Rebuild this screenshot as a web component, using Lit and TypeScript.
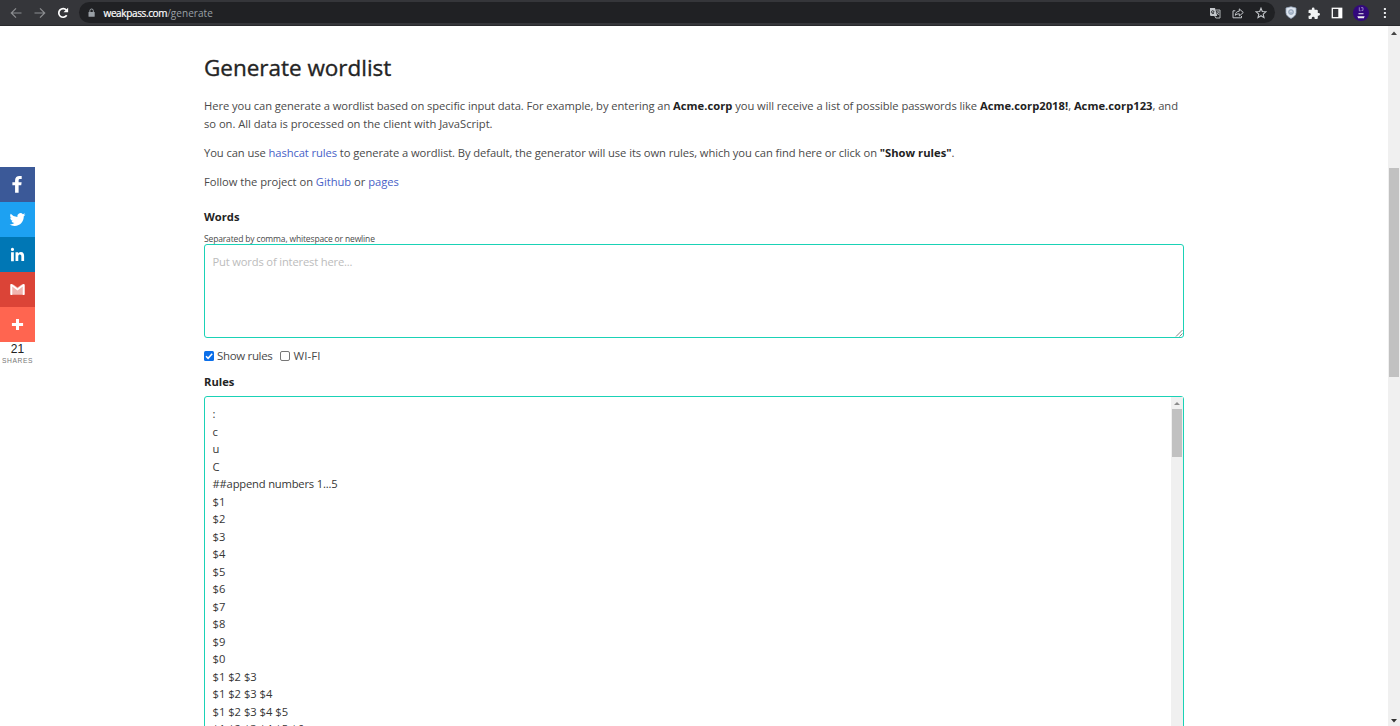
import { LitElement, html, css, svg } from "lit";
import { customElement } from "lit/decorators.js";
import { classMap } from "lit/directives/class-map.js";

const RULES = [
  ":", "c", "u", "C", "##append numbers 1...5",
  "$1", "$2", "$3", "$4", "$5", "$6", "$7", "$8", "$9", "$0",
  "$1 $2 $3", "$1 $2 $3 $4", "$1 $2 $3 $4 $5", "$1 $2 $3 $4 $5 $6",
];

const SHARES = [
  { name: "facebook", art: svg`<path d="M12.300 28.500h5.400V17.300h4l.6-4.800h-4.600V10c0-1.500.5-2.300 2.300-2.300h2.400V3.200c-.6-.1-2-.2-3.500-.2-3.900 0-6.600 2.200-6.600 6.500v3H8.200v4.800h4.100z"/>` },
  { name: "twitter", art: svg`<path d="M28 8.560a9.900 9.900 0 0 1-2.830.780 4.900 4.900 0 0 0 2.170-2.730 9.900 9.900 0 0 1-3.130 1.200 4.920 4.920 0 0 0-8.390 4.490A14 14 0 0 1 5.670 7.150a4.920 4.920 0 0 0 1.520 6.570 4.900 4.900 0 0 1-2.230-.610v.060c0 2.380 1.700 4.370 3.950 4.820a4.900 4.900 0 0 1-2.220.090 4.930 4.930 0 0 0 4.600 3.420A9.900 9.900 0 0 1 4 23.540a13.940 13.940 0 0 0 7.550 2.210c9.060 0 14-7.500 14-14v-.640A10 10 0 0 0 28 8.560z"/>` },
  { name: "linkedin", art: svg`<path d="M6.200 12.600h4.200v13.500H6.200zM8.300 5.900a2.430 2.430 0 1 1 0 4.860 2.430 2.430 0 0 1 0-4.860M13 12.600h4v1.840h.06c.56-1.060 1.930-2.180 3.970-2.180 4.240 0 5.030 2.800 5.030 6.420v7.400h-4.190v-6.560c0-1.560-.03-3.580-2.180-3.580-2.180 0-2.510 1.700-2.510 3.460v6.680H13z"/>` },
  { name: "gmail", art: svg`<path opacity=".6" d="M7 8h18v16H7z"/><path class="cut" d="M8.500 7.500h15L16 13z"/><path d="M27 9.300v13.400c0 .8-.6 1.500-1.500 1.500H24V11.500l-8 6-8-6v12.700H6.500c-.9 0-1.500-.7-1.500-1.500V9.300C5 8.400 5.700 7.800 6.500 7.800H7l9 6.600 9-6.600h.5c.9 0 1.500.6 1.500 1.500z"/>` },
  { name: "more", art: svg`<path d="M13.700 7.500h4.600v17h-4.600zM7.500 13.700h17v4.600h-17z"/>` },
];

@customElement("browser-bar")
export class BrowserBar extends LitElement {
  static styles = css`
    :host { display: flex; align-items: center; height: 26px; box-sizing: border-box; background: #35363a; border-bottom: 1px solid #292a2d; color: #e8eaed; font-family: "Open Sans", "Noto Sans", sans-serif; }
    svg { display: block; flex: none; fill: none; stroke: currentColor; }
    .nav { display: flex; align-items: center; gap: 11.500px; width: 79px; box-sizing: border-box; padding-left: 10px; flex: none; }
    .dim { color: #8c8e91; }
    .reload { color: #fff; }
    .omnibox { display: flex; align-items: center; flex: none; width: 1196px; height: 21px; box-sizing: border-box; padding: 0 8px 0 8px; border-radius: 11px; background: #202124; }
    .lock { color: #9aa0a6; }
    .url { flex: 1; padding-left: 7.500px; font-size: 10px; line-height: 20px; color: #9aa0a6; letter-spacing: .05px; }
    .host { color: #fff; letter-spacing: -.37px; -webkit-text-stroke: .2px #fff; }
    .inner { display: flex; gap: 11px; color: #c4c7cb; }
    .outer { display: flex; align-items: center; padding-left: 9.500px; gap: 11.300px; }
    .avatar { margin-left: -1px; }
    .menu { margin-left: -1px; }
  `;
  render() {
    return html`
      <div class="nav">
        <svg class="dim" width="12" height="12" viewBox="0 0 12 12" stroke-width="1.200"><path d="M11.500 6H1.500M6 1.300 1.300 6 6 10.700"/></svg>
        <svg class="dim" width="12" height="12" viewBox="0 0 12 12" stroke-width="1.200"><path d="M.5 6h10M6 1.300 10.700 6 6 10.700"/></svg>
        <svg class="reload" width="12" height="12" viewBox="0 0 12 12" stroke-width="1.700"><path d="M9.700 8.300A4.300 4.300 0 1 1 9.400 3.200"/><path d="M11.100.7v4.600H6.500z" fill="currentColor" stroke="none"/></svg>
      </div>
      <div class="omnibox">
        <svg class="lock" width="9" height="10" viewBox="0 0 9 10"><rect x="1.500" y="4" width="6.200" height="4.800" rx=".6" fill="currentColor" stroke="none"/><path d="M2.900 4.300V2.700a1.700 1.700 0 0 1 3.400 0v1.600" stroke-width="1"/></svg>
        <div class="url"><span class="host">weakpass.com</span>/generate</div>
        <div class="inner">
          <svg width="12" height="12" viewBox="0 0 12 12"><path d="M1 1h5l2.200 8H1.800L1 8.200z" fill="currentColor" stroke="none"/><path d="M6.500 3H11v8H6.800L5.800 9" stroke-width=".9"/><path d="M5.500 4.700H3.900v1.500h.9A1.500 1.500 0 1 1 4.500 3.700" stroke="#202124" stroke-width=".8"/><path d="M7.600 5h2.700M9 4.200V5M9.800 5.200 7.900 7.600M8.200 6l1.700 2" stroke-width=".7"/></svg>
          <svg width="12" height="12" viewBox="0 0 12 12" stroke-width="1"><path d="M3.300 3.800H1v7h8.500V9"/><path d="M3.300 8.300c.3-2.800 1.800-4 4-4.100V1.900l4 3.600-4 3.500V6.800c-1.700 0-3 .5-4 1.500z" stroke-linejoin="round"/></svg>
          <svg width="12" height="12" viewBox="0 0 12 12" stroke-width="1.100"><path d="m6 1.200 1.300 3.300 3.600.3-2.700 2.300.8 3.500L6 8.700l-3 1.900.8-3.500L1.100 4.800l3.600-.3z"/></svg>
        </div>
      </div>
      <div class="outer">
        <svg width="12" height="13" viewBox="0 0 12 13"><path d="M6 .8 11 2v4.500c0 2.700-2.300 4.700-5 5.900-2.700-1.200-5-3.200-5-5.900V2z" fill="#dfe6ef" stroke="#9babc0" stroke-width=".8"/><circle cx="6" cy="6" r="2.500" fill="#a8b7ca" stroke="#8798ae" stroke-width=".6"/><path d="M5 6.300c0-1.800 2-1.800 2 0" stroke="#eef" stroke-width=".6"/></svg>
        <svg width="12" height="12" viewBox="1 0 22 22"><path fill="#f1f3f4" stroke="none" d="M20.500 11H19V7a2 2 0 0 0-2-2h-4V3.500a2.500 2.500 0 0 0-5 0V5H4a2 2 0 0 0-2 2v3.800h1.500a2.700 2.700 0 0 1 0 5.400H2V20c0 1.100.9 2 2 2h3.800v-1.500a2.700 2.700 0 0 1 5.400 0V22H17a2 2 0 0 0 2-2v-4h1.500a2.500 2.500 0 0 0 0-5z"/></svg>
        <svg width="12" height="12" viewBox="0 0 12 12"><rect x="1.300" y="1.300" width="9.400" height="9.400" stroke="#fff" stroke-width="1.300"/><path d="M7.300 1H11v10H7.300z" fill="#fff" stroke="none"/></svg>
        <svg class="avatar" width="16" height="16" viewBox="0 0 16 16"><circle cx="8" cy="8" r="8" fill="#32087c" stroke="none"/><path d="M6.300 2.300v3.500h1.300M8 2.700h2v2.700H8.500" stroke="#a999d0" stroke-width=".8"/><path d="M5.500 8.800h5M4.500 11.700h7M5 12.800h6" stroke="#eee" stroke-width="1.100"/></svg>
        <svg class="menu" width="10" height="12" viewBox="0 0 10 12"><path fill="#e8eaed" stroke="none" d="M3.900 1h2v2h-2zM3.900 5h2v2h-2zM3.900 9h2v2h-2z"/></svg>
      </div>`;
  }
}

@customElement("share-rail")
export class ShareRail extends LitElement {
  static styles = css`
    :host { display: block; width: 35px; font-family: "Liberation Sans", Arial, sans-serif; text-align: center; }
    .tile { display: flex; align-items: center; justify-content: center; height: 35px; }
    .tile svg { width: 21px; height: 21px; fill: #fff; display: block; }
    .facebook { background: #3b5998; }
    .twitter { background: #1da1f2; }
    .linkedin { background: #0077b5; }
    .gmail { background: #db4437; }
    .gmail .cut { fill: #db4437; }
    .more { background: #ff6550; }
    .count { font-size: 12px; line-height: 14px; color: #222; }
    .label { font-size: 6.700px; line-height: 8px; padding-top: 1px; letter-spacing: .6px; color: #777; white-space: nowrap; }
  `;
  render() {
    return html`
      ${SHARES.map((s) => html`<div class="tile ${s.name}"><svg viewBox="0 0 32 32">${s.art}</svg></div>`)}
      <div class="count">21</div>
      <div class="label">SHARES</div>`;
  }
}

@customElement("app-root")
export class AppRoot extends LitElement {
  static styles = css`
    :host { display: flex; flex-direction: column; position: relative; height: 726px; overflow: hidden; background: #fff; color: #4a4a4a; font: 11.200px/17.500px "Open Sans", "Noto Sans", sans-serif; }
    browser-bar { flex: none; }
    .page { display: flex; flex: 1; min-height: 0; }
    .content { flex: 1; min-width: 0; padding: 27px 204px 0 204px; overflow: hidden; }
    .form { width: 980px; }
    h1 { margin: 0; font-size: 22.500px; line-height: 30px; font-weight: 500; color: #242424; -webkit-text-stroke: .35px #242424; letter-spacing: -.02px; }
    p { margin: 0; white-space: nowrap; letter-spacing: -.068px; }
    .intro { margin-top: 14px; }
    .second-line { letter-spacing: -.03px; }
    .gap { margin-top: 11.700px; }
    .usage { letter-spacing: -.082px; }
    .follow { letter-spacing: -.03px; }
    a { color: #485fc7; }
    b { color: #222; font-weight: 700; letter-spacing: .03px; }
    .label { font-weight: 700; color: #242424; }
    .words { margin-top: 18px; }
    .hint { margin-top: 7px; font-size: 8.500px; line-height: 12px; letter-spacing: -.15px; }
    .box { display: flex; box-sizing: border-box; border: 1px solid #1ad2b6; border-radius: 3px; background: #fff; }
    .input { height: 94px; margin-top: -1px; padding: 8px 7px 8px 7.500px; color: #bcbcbc; justify-content: space-between; letter-spacing: -.17px; }
    .input .grip { align-self: flex-end; margin: 0 -7px -8px 0; display: block; }
    .checks { display: flex; align-items: center; margin-top: 9px; height: 18px; font-size: 11.500px; letter-spacing: -.33px; }
    .checks svg { display: block; margin-right: 3px; }
    .checks .second { margin-left: 8px; }
    .checks .wide { letter-spacing: .1px; }
    .rules-label { margin-top: 8px; }
    .rules { margin-top: 6px; height: 420px; color: #363636; }
    .lines { flex: 1; padding: 8px 7.500px; white-space: pre; }
    .comment { letter-spacing: -.18px; }
    .inner-bar { width: 12px; background: #f0f0f0; }
    .bar { flex: none; display: flex; flex-direction: column; align-items: center; }
    .bar svg { display: block; flex: none; }
    .inner-thumb { width: 10px; height: 48px; background: #c1c1c1; }
    .outer-bar { width: 12px; background: #f0f0f0; }
    .outer-thumb { width: 10px; height: 209px; margin-top: 130px; background: #c1c1c1; }
    .down { margin-top: auto; }
    share-rail { position: absolute; left: 0; top: 166.500px; }
  `;
  render() {
    return html`
      <browser-bar></browser-bar>
      <div class="page">
        <main class="content">
          <div class="form">
            <h1>Generate wordlist</h1>
            <p class="intro">Here you can generate a wordlist based on specific input data. For example, by entering an <b>Acme.corp</b> you will receive a list of possible passwords like <b>Acme.corp2018!</b>, <b>Acme.corp123</b>, and<br><span class="second-line">so on. All data is processed on the client with JavaScript.</span></p>
            <p class="gap usage">You can use <a>hashcat rules</a> to generate a wordlist. By default, the generator will use its own rules, which you can find here or click on <b>"Show rules"</b>.</p>
            <p class="gap follow">Follow the project on <a>Github</a> or <a>pages</a></p>
            <div class="label words">Words</div>
            <div class="hint">Separated by comma, whitespace or newline</div>
            <div class="box input">
              <span>Put words of interest here...</span>
              <svg class="grip" width="8" height="8" viewBox="0 0 8 8"><path d="M1 7.500 7.500 1M4.500 7.500l3-3" stroke="#777" fill="none" stroke-width=".9"/></svg>
            </div>
            <div class="checks">
              <svg width="10" height="10" viewBox="0 0 10 10"><rect width="10" height="10" rx="1.500" fill="#0b6fea"/><path d="M2 5.200 4.100 7.300 8.200 2.700" fill="none" stroke="#fff" stroke-width="1.500"/></svg>
              <span>Show rules</span>
              <svg class="second" width="10" height="10" viewBox="0 0 10 10"><rect x=".5" y=".5" width="9" height="9" rx="1.500" fill="#fff" stroke="#767676"/></svg>
              <span class="wide">WI-FI</span>
            </div>
            <div class="label rules-label">Rules</div>
            <div class="box rules">
              <div class="lines">${RULES.map((r) => html`<div class=${classMap({ comment: r.startsWith("##") })}>${r}</div>`)}</div>
              <div class="bar inner-bar">
                <svg width="12" height="12" viewBox="0 0 12 12"><path d="M3 8h6L6 5z" fill="#8c8c8c"/></svg>
                <div class="inner-thumb"></div>
              </div>
            </div>
          </div>
        </main>
        <div class="bar outer-bar">
          <svg width="12" height="12" viewBox="0 0 12 12"><path d="M3 9h6L6 5.500z" fill="#444"/></svg>
          <div class="outer-thumb"></div>
          <svg class="down" width="12" height="12" viewBox="0 0 12 12"><path d="M3 5h6L6 8.500z" fill="#333"/></svg>
        </div>
      </div>
      <share-rail></share-rail>`;
  }
}
